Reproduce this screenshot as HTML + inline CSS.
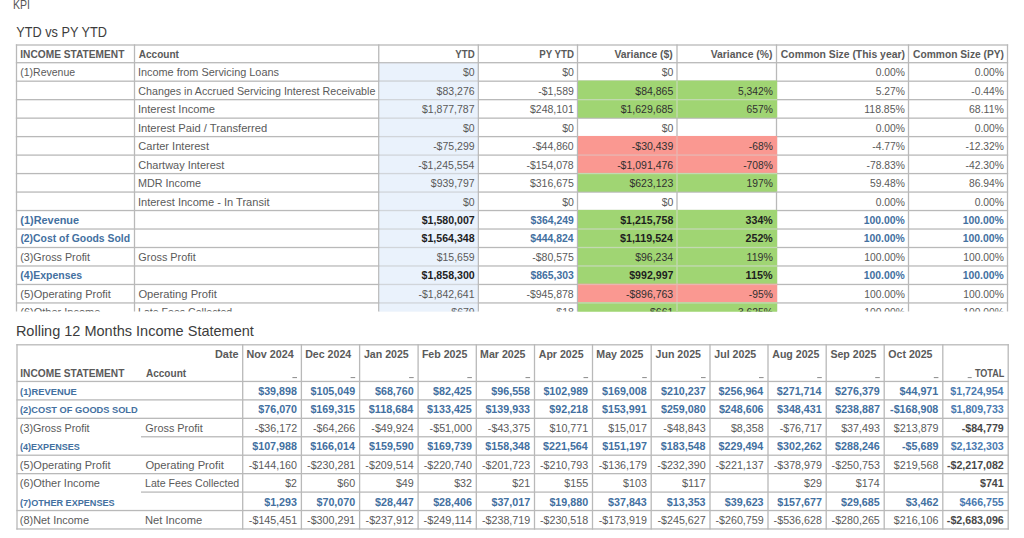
<!DOCTYPE html>
<html><head><meta charset="utf-8"><title>KPI</title>
<style>
html,body{margin:0;padding:0;background:#fff;width:1024px;height:538px;overflow:hidden;}
svg{position:absolute;left:0;top:0;display:block;}
text{font-family:"Liberation Sans",sans-serif;white-space:pre;}
</style></head><body>
<svg width="1024" height="538" viewBox="0 0 1024 538">
<text x="12.97" y="8.60" font-size="12.5" fill="#555" textLength="17.00" lengthAdjust="spacingAndGlyphs">KPI</text>
<text x="16.28" y="36.70" font-size="14.4" fill="#3c3c3c" textLength="90.70" lengthAdjust="spacingAndGlyphs">YTD vs PY YTD</text>
<text x="15.89" y="336.09" font-size="14.8" fill="#3c3c3c" textLength="238.00" lengthAdjust="spacingAndGlyphs">Rolling 12 Months Income Statement</text>
<clipPath id="c1"><rect x="0" y="0" width="1024" height="311.6"/></clipPath>
<g clip-path="url(#c1)">
<rect x="378.75" y="62.70" width="99.55" height="258.72" fill="#eaf2fc"/>
<rect x="577.50" y="81.18" width="199.00" height="18.48" fill="#a0d573"/>
<rect x="577.50" y="99.66" width="199.00" height="18.48" fill="#a0d573"/>
<rect x="577.50" y="136.62" width="199.00" height="18.48" fill="#fa9891"/>
<rect x="577.50" y="155.10" width="199.00" height="18.48" fill="#fa9891"/>
<rect x="577.50" y="173.58" width="199.00" height="18.48" fill="#a0d573"/>
<rect x="577.50" y="210.54" width="199.00" height="18.48" fill="#a0d573"/>
<rect x="577.50" y="229.02" width="199.00" height="18.48" fill="#a0d573"/>
<rect x="577.50" y="247.50" width="199.00" height="18.48" fill="#a0d573"/>
<rect x="577.50" y="265.98" width="199.00" height="18.48" fill="#a0d573"/>
<rect x="577.50" y="284.46" width="199.00" height="18.48" fill="#fa9891"/>
<rect x="577.50" y="302.94" width="199.00" height="18.48" fill="#a0d573"/>
<rect x="15.85" y="44.35" width="992.30" height="1.30" fill="#b9b9b9"/>
<rect x="15.85" y="62.05" width="992.30" height="1.30" fill="#b9b9b9"/>
<rect x="15.85" y="80.53" width="992.30" height="1.30" fill="#b9b9b9"/>
<rect x="15.85" y="99.01" width="992.30" height="1.30" fill="#b9b9b9"/>
<rect x="15.85" y="117.49" width="992.30" height="1.30" fill="#b9b9b9"/>
<rect x="15.85" y="135.97" width="992.30" height="1.30" fill="#b9b9b9"/>
<rect x="15.85" y="154.45" width="992.30" height="1.30" fill="#b9b9b9"/>
<rect x="15.85" y="172.93" width="992.30" height="1.30" fill="#b9b9b9"/>
<rect x="15.85" y="191.41" width="992.30" height="1.30" fill="#b9b9b9"/>
<rect x="15.85" y="209.89" width="992.30" height="1.30" fill="#b9b9b9"/>
<rect x="15.85" y="228.37" width="992.30" height="1.30" fill="#b9b9b9"/>
<rect x="15.85" y="246.85" width="992.30" height="1.30" fill="#b9b9b9"/>
<rect x="15.85" y="265.33" width="992.30" height="1.30" fill="#b9b9b9"/>
<rect x="15.85" y="283.81" width="992.30" height="1.30" fill="#b9b9b9"/>
<rect x="15.85" y="302.29" width="992.30" height="1.30" fill="#b9b9b9"/>
<rect x="15.85" y="320.77" width="992.30" height="1.30" fill="#b9b9b9"/>
<rect x="15.85" y="44.35" width="1.30" height="277.07" fill="#b9b9b9"/>
<rect x="133.85" y="44.35" width="1.30" height="277.07" fill="#b9b9b9"/>
<rect x="378.10" y="44.35" width="1.30" height="277.07" fill="#b9b9b9"/>
<rect x="477.65" y="44.35" width="1.30" height="277.07" fill="#b9b9b9"/>
<rect x="576.85" y="44.35" width="1.30" height="277.07" fill="#b9b9b9"/>
<rect x="676.35" y="44.35" width="1.30" height="277.07" fill="#b9b9b9"/>
<rect x="775.85" y="44.35" width="1.30" height="277.07" fill="#b9b9b9"/>
<rect x="907.85" y="44.35" width="1.30" height="277.07" fill="#b9b9b9"/>
<rect x="1006.85" y="44.35" width="1.30" height="277.07" fill="#b9b9b9"/>
<rect x="379.40" y="80.53" width="98.25" height="240.24" fill="#eaf2fc" fill-opacity="0.5"/>
<rect x="379.40" y="62.70" width="98.25" height="0.65" fill="#eaf2fc" fill-opacity="0.3"/>
<rect x="578.15" y="80.53" width="199.00" height="18.48" fill="#a0d573"/>
<rect x="578.15" y="99.01" width="199.00" height="18.48" fill="#a0d573"/>
<rect x="578.15" y="135.97" width="199.00" height="18.48" fill="#fa9891"/>
<rect x="578.15" y="154.45" width="199.00" height="18.48" fill="#fa9891"/>
<rect x="578.15" y="172.93" width="199.00" height="18.48" fill="#a0d573"/>
<rect x="578.15" y="209.89" width="199.00" height="18.48" fill="#a0d573"/>
<rect x="578.15" y="228.37" width="199.00" height="18.48" fill="#a0d573"/>
<rect x="578.15" y="246.85" width="199.00" height="18.48" fill="#a0d573"/>
<rect x="578.15" y="265.33" width="199.00" height="18.48" fill="#a0d573"/>
<rect x="578.15" y="283.81" width="199.00" height="18.48" fill="#fa9891"/>
<rect x="578.15" y="302.29" width="199.00" height="18.48" fill="#a0d573"/>
<rect x="676.35" y="80.53" width="1.30" height="18.48" fill="#c3d9b2"/>
<rect x="676.35" y="99.01" width="1.30" height="18.48" fill="#c3d9b2"/>
<rect x="578.15" y="99.01" width="199.00" height="1.30" fill="#c3d9b2"/>
<rect x="676.35" y="135.97" width="1.30" height="18.48" fill="#e9b5b1"/>
<rect x="676.35" y="154.45" width="1.30" height="18.48" fill="#e9b5b1"/>
<rect x="578.15" y="154.45" width="199.00" height="1.30" fill="#e9b5b1"/>
<rect x="676.35" y="172.93" width="1.30" height="18.48" fill="#c3d9b2"/>
<rect x="578.15" y="172.93" width="199.00" height="1.30" fill="#c3d9b2"/>
<rect x="676.35" y="209.89" width="1.30" height="18.48" fill="#c3d9b2"/>
<rect x="676.35" y="228.37" width="1.30" height="18.48" fill="#c3d9b2"/>
<rect x="578.15" y="228.37" width="199.00" height="1.30" fill="#c3d9b2"/>
<rect x="676.35" y="246.85" width="1.30" height="18.48" fill="#c3d9b2"/>
<rect x="578.15" y="246.85" width="199.00" height="1.30" fill="#c3d9b2"/>
<rect x="676.35" y="265.33" width="1.30" height="18.48" fill="#c3d9b2"/>
<rect x="578.15" y="265.33" width="199.00" height="1.30" fill="#c3d9b2"/>
<rect x="676.35" y="283.81" width="1.30" height="18.48" fill="#e9b5b1"/>
<rect x="578.15" y="283.81" width="199.00" height="1.30" fill="#e9b5b1"/>
<rect x="676.35" y="302.29" width="1.30" height="18.48" fill="#c3d9b2"/>
<rect x="578.15" y="302.29" width="199.00" height="1.30" fill="#c3d9b2"/>
<text x="20.30" y="57.63" font-size="10.4" fill="#5a5a5a" font-weight="700" textLength="104.11" lengthAdjust="spacingAndGlyphs">INCOME STATEMENT</text>
<text x="138.74" y="57.63" font-size="10.4" fill="#5a5a5a" font-weight="700" textLength="40.19" lengthAdjust="spacingAndGlyphs">Account</text>
<text x="455.37" y="57.63" font-size="10.4" fill="#5a5a5a" font-weight="700" textLength="19.36" lengthAdjust="spacingAndGlyphs">YTD</text>
<text x="539.30" y="57.63" font-size="10.4" fill="#5a5a5a" font-weight="700" textLength="34.63" lengthAdjust="spacingAndGlyphs">PY YTD</text>
<text x="614.43" y="57.63" font-size="10.4" fill="#5a5a5a" font-weight="700">Variance ($)</text>
<text x="710.68" y="57.63" font-size="10.4" fill="#5a5a5a" font-weight="700">Variance (%)</text>
<text x="780.82" y="57.63" font-size="10.4" fill="#5a5a5a" font-weight="700">Common Size (This year)</text>
<text x="913.07" y="57.63" font-size="10.4" fill="#5a5a5a" font-weight="700" textLength="90.94" lengthAdjust="spacingAndGlyphs">Common Size (PY)</text>
<text x="20.25" y="76.15" font-size="10.5" fill="#5a5a5a">(1)Revenue</text>
<text x="137.93" y="76.15" font-size="10.5" fill="#5a5a5a" textLength="141.05" lengthAdjust="spacingAndGlyphs">Income from Servicing Loans</text>
<text x="462.97" y="76.15" font-size="10.5" fill="#5a5a5a">$0</text>
<text x="562.17" y="76.15" font-size="10.5" fill="#5a5a5a">$0</text>
<text x="661.67" y="76.15" font-size="10.5" fill="#5a5a5a">$0</text>
<text x="875.70" y="76.15" font-size="10.5" fill="#5a5a5a" textLength="29.18" lengthAdjust="spacingAndGlyphs">0.00%</text>
<text x="974.70" y="76.15" font-size="10.5" fill="#5a5a5a" textLength="29.18" lengthAdjust="spacingAndGlyphs">0.00%</text>
<text x="138.37" y="94.63" font-size="10.5" fill="#5a5a5a" textLength="237.00" lengthAdjust="spacingAndGlyphs">Changes in Accrued Servicing Interest Receivable</text>
<text x="436.62" y="94.63" font-size="10.5" fill="#5a5a5a">$83,276</text>
<text x="538.21" y="94.63" font-size="10.5" fill="#5a5a5a">-$1,589</text>
<text x="635.30" y="94.63" font-size="10.5" fill="#303030">$84,865</text>
<text x="737.97" y="94.63" font-size="10.5" fill="#303030" textLength="34.90" lengthAdjust="spacingAndGlyphs">5,342%</text>
<text x="875.70" y="94.63" font-size="10.5" fill="#5a5a5a" textLength="29.18" lengthAdjust="spacingAndGlyphs">5.27%</text>
<text x="971.27" y="94.63" font-size="10.5" fill="#5a5a5a" textLength="32.60" lengthAdjust="spacingAndGlyphs">-0.44%</text>
<text x="137.93" y="113.11" font-size="10.5" fill="#5a5a5a" textLength="77.14" lengthAdjust="spacingAndGlyphs">Interest Income</text>
<text x="422.01" y="113.11" font-size="10.5" fill="#5a5a5a">$1,877,787</text>
<text x="530.00" y="113.11" font-size="10.5" fill="#5a5a5a">$248,101</text>
<text x="620.63" y="113.11" font-size="10.5" fill="#303030">$1,629,685</text>
<text x="746.56" y="113.11" font-size="10.5" fill="#303030" textLength="26.32" lengthAdjust="spacingAndGlyphs">657%</text>
<text x="864.25" y="113.11" font-size="10.5" fill="#5a5a5a" textLength="40.62" lengthAdjust="spacingAndGlyphs">118.85%</text>
<text x="968.97" y="113.11" font-size="10.5" fill="#5a5a5a" textLength="34.90" lengthAdjust="spacingAndGlyphs">68.11%</text>
<text x="137.93" y="131.59" font-size="10.5" fill="#5a5a5a" textLength="129.35" lengthAdjust="spacingAndGlyphs">Interest Paid / Transferred</text>
<text x="462.97" y="131.59" font-size="10.5" fill="#5a5a5a">$0</text>
<text x="562.17" y="131.59" font-size="10.5" fill="#5a5a5a">$0</text>
<text x="661.67" y="131.59" font-size="10.5" fill="#5a5a5a">$0</text>
<text x="875.70" y="131.59" font-size="10.5" fill="#5a5a5a" textLength="29.18" lengthAdjust="spacingAndGlyphs">0.00%</text>
<text x="974.70" y="131.59" font-size="10.5" fill="#5a5a5a" textLength="29.18" lengthAdjust="spacingAndGlyphs">0.00%</text>
<text x="138.37" y="150.07" font-size="10.5" fill="#5a5a5a" textLength="70.61" lengthAdjust="spacingAndGlyphs">Carter Interest</text>
<text x="433.14" y="150.07" font-size="10.5" fill="#5a5a5a">-$75,299</text>
<text x="532.25" y="150.07" font-size="10.5" fill="#5a5a5a">-$44,860</text>
<text x="631.84" y="150.07" font-size="10.5" fill="#303030">-$30,439</text>
<text x="748.85" y="150.07" font-size="10.5" fill="#303030" textLength="24.02" lengthAdjust="spacingAndGlyphs">-68%</text>
<text x="872.27" y="150.07" font-size="10.5" fill="#5a5a5a" textLength="32.60" lengthAdjust="spacingAndGlyphs">-4.77%</text>
<text x="965.55" y="150.07" font-size="10.5" fill="#5a5a5a" textLength="38.33" lengthAdjust="spacingAndGlyphs">-12.32%</text>
<text x="138.37" y="168.55" font-size="10.5" fill="#5a5a5a" textLength="85.91" lengthAdjust="spacingAndGlyphs">Chartway Interest</text>
<text x="418.28" y="168.55" font-size="10.5" fill="#5a5a5a">-$1,245,554</text>
<text x="526.43" y="168.55" font-size="10.5" fill="#5a5a5a">-$154,078</text>
<text x="617.13" y="168.55" font-size="10.5" fill="#303030">-$1,091,476</text>
<text x="743.13" y="168.55" font-size="10.5" fill="#303030" textLength="29.74" lengthAdjust="spacingAndGlyphs">-708%</text>
<text x="866.55" y="168.55" font-size="10.5" fill="#5a5a5a" textLength="38.33" lengthAdjust="spacingAndGlyphs">-78.83%</text>
<text x="965.55" y="168.55" font-size="10.5" fill="#5a5a5a" textLength="38.33" lengthAdjust="spacingAndGlyphs">-42.30%</text>
<text x="138.04" y="187.03" font-size="10.5" fill="#5a5a5a" textLength="62.93" lengthAdjust="spacingAndGlyphs">MDR Income</text>
<text x="430.81" y="187.03" font-size="10.5" fill="#5a5a5a">$939,797</text>
<text x="529.93" y="187.03" font-size="10.5" fill="#5a5a5a">$316,675</text>
<text x="629.45" y="187.03" font-size="10.5" fill="#303030">$623,123</text>
<text x="746.56" y="187.03" font-size="10.5" fill="#303030" textLength="26.32" lengthAdjust="spacingAndGlyphs">197%</text>
<text x="869.97" y="187.03" font-size="10.5" fill="#5a5a5a" textLength="34.90" lengthAdjust="spacingAndGlyphs">59.48%</text>
<text x="968.97" y="187.03" font-size="10.5" fill="#5a5a5a" textLength="34.90" lengthAdjust="spacingAndGlyphs">86.94%</text>
<text x="137.93" y="205.51" font-size="10.5" fill="#5a5a5a" textLength="131.55" lengthAdjust="spacingAndGlyphs">Interest Income - In Transit</text>
<text x="462.97" y="205.51" font-size="10.5" fill="#5a5a5a">$0</text>
<text x="562.17" y="205.51" font-size="10.5" fill="#5a5a5a">$0</text>
<text x="661.67" y="205.51" font-size="10.5" fill="#5a5a5a">$0</text>
<text x="875.70" y="205.51" font-size="10.5" fill="#5a5a5a" textLength="29.18" lengthAdjust="spacingAndGlyphs">0.00%</text>
<text x="974.70" y="205.51" font-size="10.5" fill="#5a5a5a" textLength="29.18" lengthAdjust="spacingAndGlyphs">0.00%</text>
<text x="20.38" y="223.96" font-size="10.4" fill="#43709f" font-weight="700" textLength="58.67" lengthAdjust="spacingAndGlyphs">(1)Revenue</text>
<text x="421.67" y="223.96" font-size="10.4" fill="#1e1e1e" font-weight="700" textLength="53.09" lengthAdjust="spacingAndGlyphs">$1,580,007</text>
<text x="530.51" y="223.96" font-size="10.4" fill="#43709f" font-weight="700">$364,249</text>
<text x="620.23" y="223.96" font-size="10.4" fill="#1e1e1e" font-weight="700" textLength="53.09" lengthAdjust="spacingAndGlyphs">$1,215,758</text>
<text x="745.64" y="223.96" font-size="10.4" fill="#1e1e1e" font-weight="700" textLength="27.13" lengthAdjust="spacingAndGlyphs">334%</text>
<text x="863.72" y="223.96" font-size="10.4" fill="#43709f" font-weight="700">100.00%</text>
<text x="962.72" y="223.96" font-size="10.4" fill="#43709f" font-weight="700">100.00%</text>
<text x="20.38" y="242.44" font-size="10.4" fill="#43709f" font-weight="700">(2)Cost of Goods Sold</text>
<text x="421.53" y="242.44" font-size="10.4" fill="#1e1e1e" font-weight="700" textLength="53.09" lengthAdjust="spacingAndGlyphs">$1,564,348</text>
<text x="530.18" y="242.44" font-size="10.4" fill="#43709f" font-weight="700">$444,824</text>
<text x="619.96" y="242.44" font-size="10.4" fill="#1e1e1e" font-weight="700" textLength="53.09" lengthAdjust="spacingAndGlyphs">$1,119,524</text>
<text x="745.64" y="242.44" font-size="10.4" fill="#1e1e1e" font-weight="700" textLength="27.13" lengthAdjust="spacingAndGlyphs">252%</text>
<text x="863.72" y="242.44" font-size="10.4" fill="#43709f" font-weight="700">100.00%</text>
<text x="962.72" y="242.44" font-size="10.4" fill="#43709f" font-weight="700">100.00%</text>
<text x="20.25" y="260.95" font-size="10.5" fill="#5a5a5a" textLength="69.73" lengthAdjust="spacingAndGlyphs">(3)Gross Profit</text>
<text x="138.37" y="260.95" font-size="10.5" fill="#5a5a5a" textLength="57.30" lengthAdjust="spacingAndGlyphs">Gross Profit</text>
<text x="436.65" y="260.95" font-size="10.5" fill="#5a5a5a">$15,659</text>
<text x="532.28" y="260.95" font-size="10.5" fill="#5a5a5a">-$80,575</text>
<text x="635.16" y="260.95" font-size="10.5" fill="#303030">$96,234</text>
<text x="746.56" y="260.95" font-size="10.5" fill="#303030" textLength="26.32" lengthAdjust="spacingAndGlyphs">119%</text>
<text x="864.25" y="260.95" font-size="10.5" fill="#5a5a5a" textLength="40.62" lengthAdjust="spacingAndGlyphs">100.00%</text>
<text x="963.25" y="260.95" font-size="10.5" fill="#5a5a5a" textLength="40.62" lengthAdjust="spacingAndGlyphs">100.00%</text>
<text x="20.38" y="279.40" font-size="10.4" fill="#43709f" font-weight="700" textLength="61.74" lengthAdjust="spacingAndGlyphs">(4)Expenses</text>
<text x="421.63" y="279.40" font-size="10.4" fill="#1e1e1e" font-weight="700" textLength="53.09" lengthAdjust="spacingAndGlyphs">$1,858,300</text>
<text x="530.50" y="279.40" font-size="10.4" fill="#43709f" font-weight="700">$865,303</text>
<text x="629.21" y="279.40" font-size="10.4" fill="#1e1e1e" font-weight="700" textLength="44.24" lengthAdjust="spacingAndGlyphs">$992,997</text>
<text x="745.64" y="279.40" font-size="10.4" fill="#1e1e1e" font-weight="700" textLength="27.13" lengthAdjust="spacingAndGlyphs">115%</text>
<text x="863.72" y="279.40" font-size="10.4" fill="#43709f" font-weight="700">100.00%</text>
<text x="962.72" y="279.40" font-size="10.4" fill="#43709f" font-weight="700">100.00%</text>
<text x="20.25" y="297.91" font-size="10.5" fill="#5a5a5a" textLength="90.63" lengthAdjust="spacingAndGlyphs">(5)Operating Profit</text>
<text x="138.40" y="297.91" font-size="10.5" fill="#5a5a5a" textLength="78.37" lengthAdjust="spacingAndGlyphs">Operating Profit</text>
<text x="418.48" y="297.91" font-size="10.5" fill="#5a5a5a">-$1,842,641</text>
<text x="526.43" y="297.91" font-size="10.5" fill="#5a5a5a">-$945,878</text>
<text x="625.93" y="297.91" font-size="10.5" fill="#303030">-$896,763</text>
<text x="748.85" y="297.91" font-size="10.5" fill="#303030" textLength="24.02" lengthAdjust="spacingAndGlyphs">-95%</text>
<text x="864.25" y="297.91" font-size="10.5" fill="#5a5a5a" textLength="40.62" lengthAdjust="spacingAndGlyphs">100.00%</text>
<text x="963.25" y="297.91" font-size="10.5" fill="#5a5a5a" textLength="40.62" lengthAdjust="spacingAndGlyphs">100.00%</text>
<text x="20.25" y="316.39" font-size="10.5" fill="#5a5a5a" textLength="80.12" lengthAdjust="spacingAndGlyphs">(6)Other Income</text>
<text x="138.04" y="316.39" font-size="10.5" fill="#5a5a5a" textLength="94.14" lengthAdjust="spacingAndGlyphs">Late Fees Collected</text>
<text x="451.32" y="316.39" font-size="10.5" fill="#5a5a5a">$679</text>
<text x="556.35" y="316.39" font-size="10.5" fill="#5a5a5a">$18</text>
<text x="650.04" y="316.39" font-size="10.5" fill="#303030">$661</text>
<text x="737.97" y="316.39" font-size="10.5" fill="#303030" textLength="34.90" lengthAdjust="spacingAndGlyphs">3,625%</text>
<text x="864.25" y="316.39" font-size="10.5" fill="#5a5a5a" textLength="40.62" lengthAdjust="spacingAndGlyphs">100.00%</text>
<text x="963.25" y="316.39" font-size="10.5" fill="#5a5a5a" textLength="40.62" lengthAdjust="spacingAndGlyphs">100.00%</text>
</g>
<rect x="16.35" y="344.15" width="992.50" height="1.30" fill="#b9b9b9"/>
<rect x="16.35" y="380.80" width="992.50" height="1.30" fill="#b9b9b9"/>
<rect x="16.35" y="399.24" width="992.50" height="1.30" fill="#b9b9b9"/>
<rect x="16.35" y="417.68" width="992.50" height="1.30" fill="#b9b9b9"/>
<rect x="141.00" y="436.12" width="867.85" height="1.30" fill="#b9b9b9"/>
<rect x="16.35" y="454.56" width="992.50" height="1.30" fill="#b9b9b9"/>
<rect x="16.35" y="473.00" width="992.50" height="1.30" fill="#b9b9b9"/>
<rect x="141.00" y="491.44" width="867.85" height="1.30" fill="#b9b9b9"/>
<rect x="16.35" y="509.88" width="992.50" height="1.30" fill="#b9b9b9"/>
<rect x="16.35" y="528.32" width="992.50" height="1.30" fill="#b9b9b9"/>
<rect x="16.35" y="344.15" width="1.30" height="185.47" fill="#b9b9b9"/>
<rect x="242.05" y="344.15" width="1.30" height="185.47" fill="#b9b9b9"/>
<rect x="300.75" y="344.15" width="1.30" height="185.47" fill="#b9b9b9"/>
<rect x="358.95" y="344.15" width="1.30" height="185.47" fill="#b9b9b9"/>
<rect x="417.45" y="344.15" width="1.30" height="185.47" fill="#b9b9b9"/>
<rect x="475.65" y="344.15" width="1.30" height="185.47" fill="#b9b9b9"/>
<rect x="533.85" y="344.15" width="1.30" height="185.47" fill="#b9b9b9"/>
<rect x="591.85" y="344.15" width="1.30" height="185.47" fill="#b9b9b9"/>
<rect x="650.55" y="344.15" width="1.30" height="185.47" fill="#b9b9b9"/>
<rect x="709.35" y="344.15" width="1.30" height="185.47" fill="#b9b9b9"/>
<rect x="767.35" y="344.15" width="1.30" height="185.47" fill="#b9b9b9"/>
<rect x="825.55" y="344.15" width="1.30" height="185.47" fill="#b9b9b9"/>
<rect x="883.55" y="344.15" width="1.30" height="185.47" fill="#b9b9b9"/>
<rect x="942.15" y="344.15" width="1.30" height="185.47" fill="#b9b9b9"/>
<rect x="1007.55" y="344.15" width="1.30" height="185.47" fill="#b9b9b9"/>
<text x="215.00" y="358.08" font-size="10.4" fill="#5a5a5a" font-weight="700" textLength="23.55" lengthAdjust="spacingAndGlyphs">Date</text>
<text x="20.30" y="376.58" font-size="10.4" fill="#5a5a5a" font-weight="700" textLength="104.11" lengthAdjust="spacingAndGlyphs">INCOME STATEMENT</text>
<text x="145.94" y="376.58" font-size="10.4" fill="#5a5a5a" font-weight="700" textLength="40.19" lengthAdjust="spacingAndGlyphs">Account</text>
<text x="246.50" y="358.08" font-size="10.4" fill="#5a5a5a" font-weight="700" textLength="47.35" lengthAdjust="spacingAndGlyphs">Nov 2024</text>
<rect x="292.40" y="377.10" width="4.60" height="1.00" fill="#8a8a8a"/>
<text x="305.20" y="358.08" font-size="10.4" fill="#5a5a5a" font-weight="700" textLength="46.01" lengthAdjust="spacingAndGlyphs">Dec 2024</text>
<rect x="350.60" y="377.10" width="4.60" height="1.00" fill="#8a8a8a"/>
<text x="363.94" y="358.08" font-size="10.4" fill="#5a5a5a" font-weight="700" textLength="44.83" lengthAdjust="spacingAndGlyphs">Jan 2025</text>
<rect x="409.10" y="377.10" width="4.60" height="1.00" fill="#8a8a8a"/>
<text x="421.90" y="358.08" font-size="10.4" fill="#5a5a5a" font-weight="700" textLength="45.41" lengthAdjust="spacingAndGlyphs">Feb 2025</text>
<rect x="467.30" y="377.10" width="4.60" height="1.00" fill="#8a8a8a"/>
<text x="480.10" y="358.08" font-size="10.4" fill="#5a5a5a" font-weight="700" textLength="45.41" lengthAdjust="spacingAndGlyphs">Mar 2025</text>
<rect x="525.50" y="377.10" width="4.60" height="1.00" fill="#8a8a8a"/>
<text x="538.74" y="358.08" font-size="10.4" fill="#5a5a5a" font-weight="700" textLength="44.81" lengthAdjust="spacingAndGlyphs">Apr 2025</text>
<rect x="583.50" y="377.10" width="4.60" height="1.00" fill="#8a8a8a"/>
<text x="596.30" y="358.08" font-size="10.4" fill="#5a5a5a" font-weight="700" textLength="47.18" lengthAdjust="spacingAndGlyphs">May 2025</text>
<rect x="642.20" y="377.10" width="4.60" height="1.00" fill="#8a8a8a"/>
<text x="655.54" y="358.08" font-size="10.4" fill="#5a5a5a" font-weight="700" textLength="45.41" lengthAdjust="spacingAndGlyphs">Jun 2025</text>
<rect x="701.00" y="377.10" width="4.60" height="1.00" fill="#8a8a8a"/>
<text x="714.34" y="358.08" font-size="10.4" fill="#5a5a5a" font-weight="700" textLength="41.87" lengthAdjust="spacingAndGlyphs">Jul 2025</text>
<rect x="759.00" y="377.10" width="4.60" height="1.00" fill="#8a8a8a"/>
<text x="772.24" y="358.08" font-size="10.4" fill="#5a5a5a" font-weight="700" textLength="47.17" lengthAdjust="spacingAndGlyphs">Aug 2025</text>
<rect x="817.20" y="377.10" width="4.60" height="1.00" fill="#8a8a8a"/>
<text x="830.40" y="358.08" font-size="10.4" fill="#5a5a5a" font-weight="700" textLength="46.00" lengthAdjust="spacingAndGlyphs">Sep 2025</text>
<rect x="875.20" y="377.10" width="4.60" height="1.00" fill="#8a8a8a"/>
<text x="888.27" y="358.08" font-size="10.4" fill="#5a5a5a" font-weight="700" textLength="44.23" lengthAdjust="spacingAndGlyphs">Oct 2025</text>
<rect x="933.80" y="377.10" width="4.60" height="1.00" fill="#8a8a8a"/>
<rect x="967.70" y="377.10" width="4.00" height="1.00" fill="#8a8a8a"/>
<text x="974.88" y="376.58" font-size="10.4" fill="#5a5a5a" font-weight="700" textLength="29.44" lengthAdjust="spacingAndGlyphs">TOTAL</text>
<text x="20.02" y="395.01" font-size="9.7" fill="#43709f" font-weight="700" textLength="56.66" lengthAdjust="spacingAndGlyphs">(1)REVENUE</text>
<text x="258.20" y="395.05" font-size="10.4" fill="#43709f" font-weight="700" textLength="38.72" lengthAdjust="spacingAndGlyphs">$39,898</text>
<text x="310.51" y="395.05" font-size="10.4" fill="#43709f" font-weight="700" textLength="44.68" lengthAdjust="spacingAndGlyphs">$105,049</text>
<text x="375.01" y="395.05" font-size="10.4" fill="#43709f" font-weight="700" textLength="38.72" lengthAdjust="spacingAndGlyphs">$68,760</text>
<text x="433.07" y="395.05" font-size="10.4" fill="#43709f" font-weight="700" textLength="38.72" lengthAdjust="spacingAndGlyphs">$82,425</text>
<text x="491.30" y="395.05" font-size="10.4" fill="#43709f" font-weight="700" textLength="38.72" lengthAdjust="spacingAndGlyphs">$96,558</text>
<text x="543.41" y="395.05" font-size="10.4" fill="#43709f" font-weight="700" textLength="44.68" lengthAdjust="spacingAndGlyphs">$102,989</text>
<text x="602.04" y="395.05" font-size="10.4" fill="#43709f" font-weight="700" textLength="44.68" lengthAdjust="spacingAndGlyphs">$169,008</text>
<text x="660.98" y="395.05" font-size="10.4" fill="#43709f" font-weight="700" textLength="44.68" lengthAdjust="spacingAndGlyphs">$210,237</text>
<text x="718.58" y="395.05" font-size="10.4" fill="#43709f" font-weight="700" textLength="44.68" lengthAdjust="spacingAndGlyphs">$256,964</text>
<text x="776.78" y="395.05" font-size="10.4" fill="#43709f" font-weight="700" textLength="44.68" lengthAdjust="spacingAndGlyphs">$271,714</text>
<text x="835.11" y="395.05" font-size="10.4" fill="#43709f" font-weight="700" textLength="44.68" lengthAdjust="spacingAndGlyphs">$276,379</text>
<text x="899.57" y="395.05" font-size="10.4" fill="#43709f" font-weight="700" textLength="38.72" lengthAdjust="spacingAndGlyphs">$44,971</text>
<text x="950.36" y="395.05" font-size="10.4" fill="#4a7ab0" font-weight="700" textLength="53.09" lengthAdjust="spacingAndGlyphs">$1,724,954</text>
<text x="20.02" y="413.45" font-size="9.7" fill="#43709f" font-weight="700" textLength="117.69" lengthAdjust="spacingAndGlyphs">(2)COST OF GOODS SOLD</text>
<text x="258.31" y="413.49" font-size="10.4" fill="#43709f" font-weight="700" textLength="38.72" lengthAdjust="spacingAndGlyphs">$76,070</text>
<text x="310.41" y="413.49" font-size="10.4" fill="#43709f" font-weight="700" textLength="44.68" lengthAdjust="spacingAndGlyphs">$169,315</text>
<text x="368.68" y="413.49" font-size="10.4" fill="#43709f" font-weight="700" textLength="44.68" lengthAdjust="spacingAndGlyphs">$118,684</text>
<text x="427.11" y="413.49" font-size="10.4" fill="#43709f" font-weight="700" textLength="44.68" lengthAdjust="spacingAndGlyphs">$133,425</text>
<text x="485.40" y="413.49" font-size="10.4" fill="#43709f" font-weight="700" textLength="44.68" lengthAdjust="spacingAndGlyphs">$139,933</text>
<text x="549.30" y="413.49" font-size="10.4" fill="#43709f" font-weight="700" textLength="38.72" lengthAdjust="spacingAndGlyphs">$92,218</text>
<text x="602.01" y="413.49" font-size="10.4" fill="#43709f" font-weight="700" textLength="44.68" lengthAdjust="spacingAndGlyphs">$153,991</text>
<text x="660.95" y="413.49" font-size="10.4" fill="#43709f" font-weight="700" textLength="44.68" lengthAdjust="spacingAndGlyphs">$259,080</text>
<text x="718.90" y="413.49" font-size="10.4" fill="#43709f" font-weight="700" textLength="44.68" lengthAdjust="spacingAndGlyphs">$248,606</text>
<text x="777.01" y="413.49" font-size="10.4" fill="#43709f" font-weight="700" textLength="44.68" lengthAdjust="spacingAndGlyphs">$348,431</text>
<text x="835.18" y="413.49" font-size="10.4" fill="#43709f" font-weight="700" textLength="44.68" lengthAdjust="spacingAndGlyphs">$238,887</text>
<text x="890.07" y="413.49" font-size="10.4" fill="#43709f" font-weight="700" textLength="48.25" lengthAdjust="spacingAndGlyphs">-$168,908</text>
<text x="950.68" y="413.49" font-size="10.4" fill="#4a7ab0" font-weight="700" textLength="53.09" lengthAdjust="spacingAndGlyphs">$1,809,733</text>
<text x="19.85" y="431.96" font-size="10.5" fill="#5a5a5a" textLength="69.73" lengthAdjust="spacingAndGlyphs">(3)Gross Profit</text>
<text x="145.37" y="431.96" font-size="10.5" fill="#5a5a5a" textLength="57.30" lengthAdjust="spacingAndGlyphs">Gross Profit</text>
<text x="254.85" y="431.96" font-size="10.5" fill="#5a5a5a" textLength="42.28" lengthAdjust="spacingAndGlyphs">-$36,172</text>
<text x="312.98" y="431.96" font-size="10.5" fill="#5a5a5a" textLength="42.28" lengthAdjust="spacingAndGlyphs">-$64,266</text>
<text x="371.33" y="431.96" font-size="10.5" fill="#5a5a5a" textLength="42.28" lengthAdjust="spacingAndGlyphs">-$49,924</text>
<text x="429.63" y="431.96" font-size="10.5" fill="#5a5a5a" textLength="42.28" lengthAdjust="spacingAndGlyphs">-$51,000</text>
<text x="487.86" y="431.96" font-size="10.5" fill="#5a5a5a" textLength="42.28" lengthAdjust="spacingAndGlyphs">-$43,375</text>
<text x="549.50" y="431.96" font-size="10.5" fill="#5a5a5a" textLength="38.71" lengthAdjust="spacingAndGlyphs">$10,771</text>
<text x="608.21" y="431.96" font-size="10.5" fill="#5a5a5a" textLength="38.71" lengthAdjust="spacingAndGlyphs">$15,017</text>
<text x="663.38" y="431.96" font-size="10.5" fill="#5a5a5a" textLength="42.28" lengthAdjust="spacingAndGlyphs">-$48,843</text>
<text x="730.90" y="431.96" font-size="10.5" fill="#5a5a5a" textLength="32.76" lengthAdjust="spacingAndGlyphs">$8,358</text>
<text x="779.65" y="431.96" font-size="10.5" fill="#5a5a5a" textLength="42.28" lengthAdjust="spacingAndGlyphs">-$76,717</text>
<text x="841.15" y="431.96" font-size="10.5" fill="#5a5a5a" textLength="38.71" lengthAdjust="spacingAndGlyphs">$37,493</text>
<text x="893.83" y="431.96" font-size="10.5" fill="#5a5a5a" textLength="44.67" lengthAdjust="spacingAndGlyphs">$213,879</text>
<text x="961.70" y="431.93" font-size="10.4" fill="#484848" font-weight="700" textLength="42.08" lengthAdjust="spacingAndGlyphs">-$84,779</text>
<text x="20.02" y="450.33" font-size="9.7" fill="#43709f" font-weight="700" textLength="59.76" lengthAdjust="spacingAndGlyphs">(4)EXPENSES</text>
<text x="252.24" y="450.37" font-size="10.4" fill="#43709f" font-weight="700" textLength="44.68" lengthAdjust="spacingAndGlyphs">$107,988</text>
<text x="310.18" y="450.37" font-size="10.4" fill="#43709f" font-weight="700" textLength="44.68" lengthAdjust="spacingAndGlyphs">$166,014</text>
<text x="369.05" y="450.37" font-size="10.4" fill="#43709f" font-weight="700" textLength="44.68" lengthAdjust="spacingAndGlyphs">$159,590</text>
<text x="427.21" y="450.37" font-size="10.4" fill="#43709f" font-weight="700" textLength="44.68" lengthAdjust="spacingAndGlyphs">$169,739</text>
<text x="485.34" y="450.37" font-size="10.4" fill="#43709f" font-weight="700" textLength="44.68" lengthAdjust="spacingAndGlyphs">$158,348</text>
<text x="543.08" y="450.37" font-size="10.4" fill="#43709f" font-weight="700" textLength="44.68" lengthAdjust="spacingAndGlyphs">$221,564</text>
<text x="602.18" y="450.37" font-size="10.4" fill="#43709f" font-weight="700" textLength="44.68" lengthAdjust="spacingAndGlyphs">$151,197</text>
<text x="660.84" y="450.37" font-size="10.4" fill="#43709f" font-weight="700" textLength="44.68" lengthAdjust="spacingAndGlyphs">$183,548</text>
<text x="718.58" y="450.37" font-size="10.4" fill="#43709f" font-weight="700" textLength="44.68" lengthAdjust="spacingAndGlyphs">$229,494</text>
<text x="777.14" y="450.37" font-size="10.4" fill="#43709f" font-weight="700" textLength="44.68" lengthAdjust="spacingAndGlyphs">$302,262</text>
<text x="835.10" y="450.37" font-size="10.4" fill="#43709f" font-weight="700" textLength="44.68" lengthAdjust="spacingAndGlyphs">$288,246</text>
<text x="902.06" y="450.37" font-size="10.4" fill="#43709f" font-weight="700" textLength="36.33" lengthAdjust="spacingAndGlyphs">-$5,689</text>
<text x="950.68" y="450.37" font-size="10.4" fill="#4a7ab0" font-weight="700" textLength="53.09" lengthAdjust="spacingAndGlyphs">$2,132,303</text>
<text x="19.85" y="468.84" font-size="10.5" fill="#5a5a5a" textLength="90.63" lengthAdjust="spacingAndGlyphs">(5)Operating Profit</text>
<text x="145.40" y="468.84" font-size="10.5" fill="#5a5a5a" textLength="78.37" lengthAdjust="spacingAndGlyphs">Operating Profit</text>
<text x="248.77" y="468.84" font-size="10.5" fill="#5a5a5a" textLength="48.24" lengthAdjust="spacingAndGlyphs">-$144,160</text>
<text x="307.08" y="468.84" font-size="10.5" fill="#5a5a5a" textLength="48.24" lengthAdjust="spacingAndGlyphs">-$230,281</text>
<text x="365.37" y="468.84" font-size="10.5" fill="#5a5a5a" textLength="48.24" lengthAdjust="spacingAndGlyphs">-$209,514</text>
<text x="423.67" y="468.84" font-size="10.5" fill="#5a5a5a" textLength="48.24" lengthAdjust="spacingAndGlyphs">-$220,740</text>
<text x="481.92" y="468.84" font-size="10.5" fill="#5a5a5a" textLength="48.24" lengthAdjust="spacingAndGlyphs">-$201,723</text>
<text x="539.92" y="468.84" font-size="10.5" fill="#5a5a5a" textLength="48.24" lengthAdjust="spacingAndGlyphs">-$210,793</text>
<text x="598.66" y="468.84" font-size="10.5" fill="#5a5a5a" textLength="48.24" lengthAdjust="spacingAndGlyphs">-$136,179</text>
<text x="657.37" y="468.84" font-size="10.5" fill="#5a5a5a" textLength="48.24" lengthAdjust="spacingAndGlyphs">-$232,390</text>
<text x="715.49" y="468.84" font-size="10.5" fill="#5a5a5a" textLength="48.24" lengthAdjust="spacingAndGlyphs">-$221,137</text>
<text x="773.66" y="468.84" font-size="10.5" fill="#5a5a5a" textLength="48.24" lengthAdjust="spacingAndGlyphs">-$378,979</text>
<text x="831.62" y="468.84" font-size="10.5" fill="#5a5a5a" textLength="48.24" lengthAdjust="spacingAndGlyphs">-$250,753</text>
<text x="893.79" y="468.84" font-size="10.5" fill="#5a5a5a" textLength="44.67" lengthAdjust="spacingAndGlyphs">$219,568</text>
<text x="946.91" y="468.81" font-size="10.4" fill="#484848" font-weight="700" textLength="56.90" lengthAdjust="spacingAndGlyphs">-$2,217,082</text>
<text x="19.85" y="487.28" font-size="10.5" fill="#5a5a5a" textLength="80.12" lengthAdjust="spacingAndGlyphs">(6)Other Income</text>
<text x="145.04" y="487.28" font-size="10.5" fill="#5a5a5a" textLength="94.14" lengthAdjust="spacingAndGlyphs">Late Fees Collected</text>
<text x="285.22" y="487.28" font-size="10.5" fill="#5a5a5a">$2</text>
<text x="337.34" y="487.28" font-size="10.5" fill="#5a5a5a" textLength="17.87" lengthAdjust="spacingAndGlyphs">$60</text>
<text x="395.93" y="487.28" font-size="10.5" fill="#5a5a5a" textLength="17.87" lengthAdjust="spacingAndGlyphs">$49</text>
<text x="454.16" y="487.28" font-size="10.5" fill="#5a5a5a" textLength="17.87" lengthAdjust="spacingAndGlyphs">$32</text>
<text x="512.34" y="487.28" font-size="10.5" fill="#5a5a5a" textLength="17.87" lengthAdjust="spacingAndGlyphs">$21</text>
<text x="564.32" y="487.28" font-size="10.5" fill="#5a5a5a" textLength="23.83" lengthAdjust="spacingAndGlyphs">$155</text>
<text x="623.04" y="487.28" font-size="10.5" fill="#5a5a5a" textLength="23.83" lengthAdjust="spacingAndGlyphs">$103</text>
<text x="681.90" y="487.28" font-size="10.5" fill="#5a5a5a" textLength="23.83" lengthAdjust="spacingAndGlyphs">$117</text>
<text x="804.03" y="487.28" font-size="10.5" fill="#5a5a5a" textLength="17.87" lengthAdjust="spacingAndGlyphs">$29</text>
<text x="855.88" y="487.28" font-size="10.5" fill="#5a5a5a" textLength="23.83" lengthAdjust="spacingAndGlyphs">$174</text>
<text x="979.98" y="487.25" font-size="10.4" fill="#484848" font-weight="700" textLength="23.71" lengthAdjust="spacingAndGlyphs">$741</text>
<text x="20.02" y="505.65" font-size="9.7" fill="#43709f" font-weight="700" textLength="94.66" lengthAdjust="spacingAndGlyphs">(7)OTHER EXPENSES</text>
<text x="264.21" y="505.69" font-size="10.4" fill="#43709f" font-weight="700" textLength="32.76" lengthAdjust="spacingAndGlyphs">$1,293</text>
<text x="316.51" y="505.69" font-size="10.4" fill="#43709f" font-weight="700" textLength="38.72" lengthAdjust="spacingAndGlyphs">$70,070</text>
<text x="375.04" y="505.69" font-size="10.4" fill="#43709f" font-weight="700" textLength="38.72" lengthAdjust="spacingAndGlyphs">$28,447</text>
<text x="433.15" y="505.69" font-size="10.4" fill="#43709f" font-weight="700" textLength="38.72" lengthAdjust="spacingAndGlyphs">$28,406</text>
<text x="491.44" y="505.69" font-size="10.4" fill="#43709f" font-weight="700" textLength="38.72" lengthAdjust="spacingAndGlyphs">$37,017</text>
<text x="549.41" y="505.69" font-size="10.4" fill="#43709f" font-weight="700" textLength="38.72" lengthAdjust="spacingAndGlyphs">$19,880</text>
<text x="608.05" y="505.69" font-size="10.4" fill="#43709f" font-weight="700" textLength="38.72" lengthAdjust="spacingAndGlyphs">$37,843</text>
<text x="666.85" y="505.69" font-size="10.4" fill="#43709f" font-weight="700" textLength="38.72" lengthAdjust="spacingAndGlyphs">$13,353</text>
<text x="724.85" y="505.69" font-size="10.4" fill="#43709f" font-weight="700" textLength="38.72" lengthAdjust="spacingAndGlyphs">$39,623</text>
<text x="777.18" y="505.69" font-size="10.4" fill="#43709f" font-weight="700" textLength="44.68" lengthAdjust="spacingAndGlyphs">$157,677</text>
<text x="840.97" y="505.69" font-size="10.4" fill="#43709f" font-weight="700" textLength="38.72" lengthAdjust="spacingAndGlyphs">$29,685</text>
<text x="905.65" y="505.69" font-size="10.4" fill="#43709f" font-weight="700" textLength="32.76" lengthAdjust="spacingAndGlyphs">$3,462</text>
<text x="959.44" y="505.69" font-size="10.4" fill="#4a7ab0" font-weight="700" textLength="44.24" lengthAdjust="spacingAndGlyphs">$466,755</text>
<text x="19.85" y="524.16" font-size="10.5" fill="#5a5a5a" textLength="69.12" lengthAdjust="spacingAndGlyphs">(8)Net Income</text>
<text x="145.04" y="524.16" font-size="10.5" fill="#5a5a5a" textLength="57.13" lengthAdjust="spacingAndGlyphs">Net Income</text>
<text x="248.88" y="524.16" font-size="10.5" fill="#5a5a5a" textLength="48.24" lengthAdjust="spacingAndGlyphs">-$145,451</text>
<text x="307.08" y="524.16" font-size="10.5" fill="#5a5a5a" textLength="48.24" lengthAdjust="spacingAndGlyphs">-$300,291</text>
<text x="365.59" y="524.16" font-size="10.5" fill="#5a5a5a" textLength="48.24" lengthAdjust="spacingAndGlyphs">-$237,912</text>
<text x="423.57" y="524.16" font-size="10.5" fill="#5a5a5a" textLength="48.24" lengthAdjust="spacingAndGlyphs">-$249,114</text>
<text x="481.96" y="524.16" font-size="10.5" fill="#5a5a5a" textLength="48.24" lengthAdjust="spacingAndGlyphs">-$238,719</text>
<text x="539.92" y="524.16" font-size="10.5" fill="#5a5a5a" textLength="48.24" lengthAdjust="spacingAndGlyphs">-$230,518</text>
<text x="598.66" y="524.16" font-size="10.5" fill="#5a5a5a" textLength="48.24" lengthAdjust="spacingAndGlyphs">-$173,919</text>
<text x="657.49" y="524.16" font-size="10.5" fill="#5a5a5a" textLength="48.24" lengthAdjust="spacingAndGlyphs">-$245,627</text>
<text x="715.46" y="524.16" font-size="10.5" fill="#5a5a5a" textLength="48.24" lengthAdjust="spacingAndGlyphs">-$260,759</text>
<text x="773.62" y="524.16" font-size="10.5" fill="#5a5a5a" textLength="48.24" lengthAdjust="spacingAndGlyphs">-$536,628</text>
<text x="831.60" y="524.16" font-size="10.5" fill="#5a5a5a" textLength="48.24" lengthAdjust="spacingAndGlyphs">-$280,265</text>
<text x="893.79" y="524.16" font-size="10.5" fill="#5a5a5a" textLength="44.67" lengthAdjust="spacingAndGlyphs">$216,106</text>
<text x="946.87" y="524.13" font-size="10.4" fill="#484848" font-weight="700" textLength="56.90" lengthAdjust="spacingAndGlyphs">-$2,683,096</text>
</svg>
</body></html>
